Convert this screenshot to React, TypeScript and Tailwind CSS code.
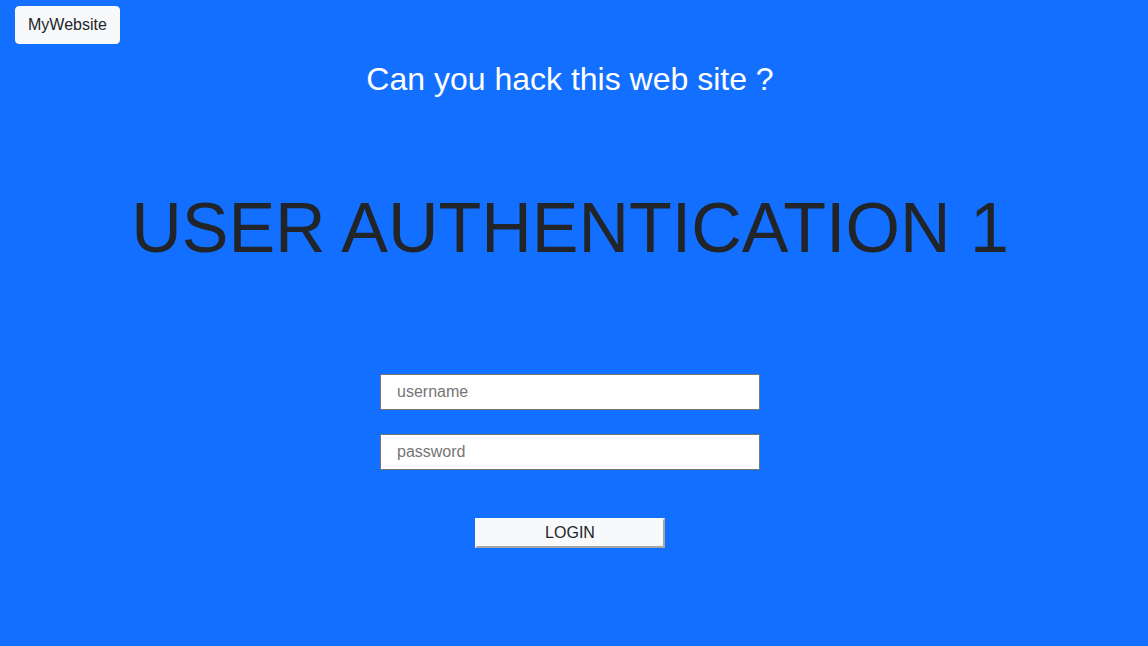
export default function App() {
  return (
    <div className="flex min-h-screen flex-col bg-[#136fff] font-['Liberation_Sans',Arial,sans-serif] text-base text-[#212529]">
      <nav className="flex px-[15px] pt-1.5">
        <a href="#" className="rounded border border-[#f8f9fa] bg-[#f8f9fa] px-3 py-1.5">
          MyWebsite
        </a>
      </nav>
      <main className="flex flex-col items-center pr-2 text-center">
        <h2 className="mt-4 text-[32px] leading-[38px] text-white">Can you hack this web site ?</h2>
        <h1 className="mt-[88px] text-[70px] leading-[84px]">USER AUTHENTICATION 1</h1>
        <form className="mt-[104px] flex w-full flex-col items-center" onSubmit={(e) => e.preventDefault()}>
          <input
            type="text"
            aria-label="username"
            placeholder="username"
            className="h-9 w-[380px] max-w-full border border-[#767676] bg-white px-4 placeholder:text-[#757575]"
          />
          <input
            type="password"
            aria-label="password"
            placeholder="password"
            className="mt-6 h-9 w-[380px] max-w-full border border-[#767676] bg-white px-4 placeholder:text-[#757575]"
          />
          <button type="submit" className="mt-12 h-[30px] w-[190px] border-2 border-[#f8f9fa] [border-style:outset] bg-[#f8f9fa] leading-6">
            LOGIN
          </button>
        </form>
      </main>
    </div>
  );
}
